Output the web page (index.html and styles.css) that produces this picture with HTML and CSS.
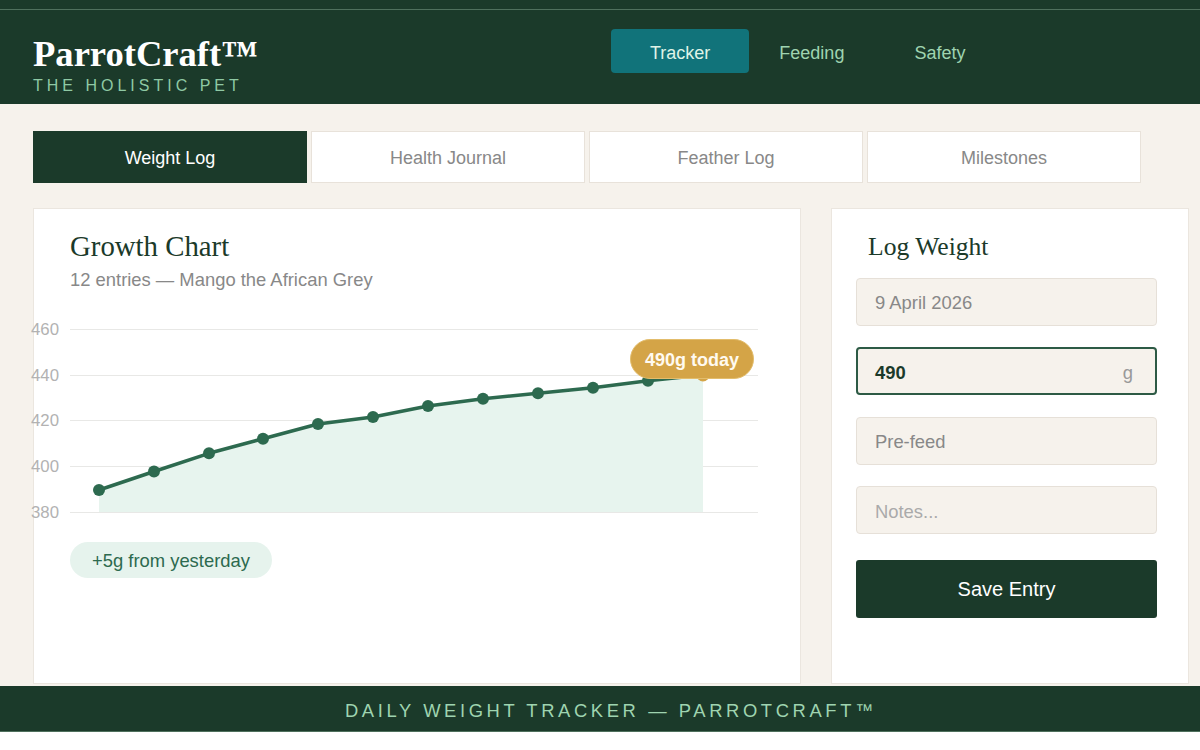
FILE: index.html
```html
<!DOCTYPE html>
<html lang="en">
<head>
<meta charset="utf-8">
<title>ParrotCraft™ — Weight Tracker</title>
<link rel="stylesheet" href="styles.css">
</head>
<body>
<div class="topbar"></div>
<header class="header">
  <div class="brand">
    <div class="logo">ParrotCraft™</div>
    <div class="tagline">THE HOLISTIC PET</div>
  </div>
  <nav class="nav">
    <a class="nav-link active">Tracker</a>
    <a class="nav-link">Feeding</a>
    <a class="nav-link">Safety</a>
  </nav>
</header>
<main class="main">
  <div class="tabs">
    <div class="tab active">Weight Log</div>
    <div class="tab">Health Journal</div>
    <div class="tab">Feather Log</div>
    <div class="tab">Milestones</div>
  </div>
  <div class="panels">
    <section class="card chart-card">
      <h2 class="card-title">Growth Chart</h2>
      <p class="card-sub">12 entries — Mango the African Grey</p>
      <div class="chart">
        <svg class="chart-svg" width="688" height="230" viewBox="0 0 688 230">
          <g class="grid">
            <line x1="0" y1="29.5" x2="688" y2="29.5"/>
            <line x1="0" y1="75.5" x2="688" y2="75.5"/>
            <line x1="0" y1="120.5" x2="688" y2="120.5"/>
            <line x1="0" y1="166.5" x2="688" y2="166.5"/>
            <line x1="0" y1="212.5" x2="688" y2="212.5"/>
          </g>
          <g class="ylabels">
            <text x="-11" y="35">460</text>
            <text x="-11" y="81">440</text>
            <text x="-11" y="126">420</text>
            <text x="-11" y="172">400</text>
            <text x="-11" y="218">380</text>
          </g>
          <polygon class="area" points="29,212 29,190 84,171.5 139,153.3 193,138.7 248,124 303,117 358,106 413,98.7 468,93.3 523,87.7 578,80.7 633,75 633,212"/>
          <polyline class="line" points="29,190 84,171.5 139,153.3 193,138.7 248,124 303,117 358,106 413,98.7 468,93.3 523,87.7 578,80.7 633,75"/>
          <g class="dots">
            <circle cx="29" cy="190" r="6"/>
            <circle cx="84" cy="171.5" r="6"/>
            <circle cx="139" cy="153.3" r="6"/>
            <circle cx="193" cy="138.7" r="6"/>
            <circle cx="248" cy="124" r="6"/>
            <circle cx="303" cy="117" r="6"/>
            <circle cx="358" cy="106" r="6"/>
            <circle cx="413" cy="98.7" r="6"/>
            <circle cx="468" cy="93.3" r="6"/>
            <circle cx="523" cy="87.7" r="6"/>
            <circle cx="578" cy="80.7" r="6"/>
          </g>
          <circle class="dot-today" cx="633" cy="75" r="6.5"/>
        </svg>
        <div class="tooltip">490g today</div>
      </div>
      <span class="badge">+5g from yesterday</span>
    </section>
    <section class="card form-card">
      <h2 class="form-title">Log Weight</h2>
      <div class="field">9 April 2026</div>
      <div class="field field-active"><span class="value">490</span><span class="unit">g</span></div>
      <div class="field">Pre-feed</div>
      <div class="field placeholder">Notes...</div>
      <button class="save">Save Entry</button>
    </section>
  </div>
</main>
<footer class="footer">DAILY WEIGHT TRACKER — PARROTCRAFT™</footer>
</body>
</html>
```

FILE: styles.css
```css
* { box-sizing: border-box; }

html, body {
  margin: 0;
  padding: 0;
  background: #ffffff;
}

body {
  font-family: "Liberation Sans", Arial, sans-serif;
  color: #1b3a2a;
}

.topbar {
  height: 10px;
  background: #1b3a2a;
  border-bottom: 1px solid #4f705d;
}

.header {
  height: 94px;
  background: #1b3a2a;
  padding: 19px 33px 0;
  display: flex;
  align-items: flex-start;
}

.brand {
  flex: 0 0 578px;
  padding-top: 5px;
}

.logo {
  font-family: "Liberation Serif", "Times New Roman", serif;
  font-weight: bold;
  font-size: 36.6px;
  line-height: 39.6px;
  color: #ffffff;
}

.tagline {
  margin-top: 3px;
  font-size: 16px;
  line-height: 18.4px;
  letter-spacing: 4px;
  color: #8fc9a4;
}

.nav {
  display: flex;
}

.nav-link {
  display: flex;
  align-items: center;
  height: 44px;
  padding: 4px 40px 0 30px;
  font-size: 18px;
  color: #9fd4b0;
  border-radius: 4px;
}

.nav-link.active {
  padding: 4px 39px 0;
  background: #11737a;
  color: #dff3e7;
}

.main {
  background: #f6f2ec;
  padding: 27px 11px 2px 33px;
}

.tabs {
  display: grid;
  grid-template-columns: repeat(4, 274px);
  gap: 4px;
}

.tab {
  height: 52px;
  padding-top: 3px;
  display: flex;
  align-items: center;
  justify-content: center;
  background: #ffffff;
  border: 1px solid #e8e2da;
  font-size: 18px;
  color: #888888;
}

.tab.active {
  background: #1b3a2a;
  border-color: #1b3a2a;
  color: #ffffff;
}

.panels {
  margin-top: 25px;
  display: grid;
  grid-template-columns: 768px 358px;
  gap: 30px;
}

.card {
  height: 476px;
  background: #ffffff;
  border: 1px solid #ebe6df;
}

.chart-card {
  padding: 20px 36px;
  display: flex;
  flex-direction: column;
  align-items: flex-start;
}

.card-title {
  margin: 0 0 6px;
  font-family: "Liberation Serif", "Times New Roman", serif;
  font-weight: normal;
  font-size: 28.8px;
  line-height: 1.2;
  color: #1b3a2a;
}

.card-sub {
  margin: 0;
  font-size: 18.4px;
  line-height: 20px;
  color: #888888;
}

.chart {
  position: relative;
  margin-top: 10px;
  width: 688px;
  height: 230px;
}

.chart-svg {
  display: block;
  overflow: visible;
}

.grid line {
  stroke: #e8e8e6;
  stroke-width: 1;
  shape-rendering: crispEdges;
}

.ylabels text {
  font-family: "Liberation Sans", Arial, sans-serif;
  font-size: 16.8px;
  fill: #b2b2b2;
  text-anchor: end;
}

.area {
  fill: #e7f4ee;
}

.line {
  fill: none;
  stroke: #2d6a4f;
  stroke-width: 3.5;
  stroke-linejoin: round;
  stroke-linecap: round;
}

.dots circle {
  fill: #2d6a4f;
}

.dot-today {
  fill: #d4a447;
}

.tooltip {
  position: absolute;
  left: 560px;
  top: 39px;
  width: 124px;
  height: 40px;
  padding-top: 3px;
  border-radius: 20px;
  background: #d4a447;
  border: 1px solid #e3bd6c;
  color: #fffaf0;
  font-weight: bold;
  font-size: 18px;
  display: flex;
  align-items: center;
  justify-content: center;
}

.badge {
  margin-top: 12px;
  display: inline-block;
  padding: 9px 22px 7px;
  line-height: 20px;
  border-radius: 18px;
  background: #e6f3ed;
  color: #2d6a4f;
  font-size: 18.4px;
}

.form-card {
  padding: 23px 31px 0 24px;
  display: flex;
  flex-direction: column;
}

.form-title {
  margin: 0 0 15px;
  padding-left: 12px;
  font-family: "Liberation Serif", "Times New Roman", serif;
  font-weight: normal;
  font-size: 25.6px;
  line-height: 1.2;
  color: #1b3a2a;
}

.field {
  width: 301px;
  height: 48px;
  margin-bottom: 21.5px;
  padding: 3px 18px 0;
  display: flex;
  align-items: center;
  background: #f6f2ec;
  border: 1px solid #e6e0d8;
  border-radius: 4px;
  font-size: 18.4px;
  color: #888888;
}

.field.placeholder {
  color: #aaaaaa;
}

.field-active {
  border: 2px solid #2d5a45;
  padding: 3px 22px 0 17px;
}

.field-active .value {
  font-weight: bold;
  color: #1b3a2a;
}

.field-active .unit {
  margin-left: auto;
  color: #999999;
}

.save {
  margin-top: 4px;
  width: 301px;
  height: 58px;
  padding-top: 2px;
  border: none;
  border-radius: 3px;
  background: #1b3a2a;
  color: #ffffff;
  font-family: "Liberation Sans", Arial, sans-serif;
  font-size: 20px;
}

.footer {
  background: #1b3a2a;
  padding: 15px 0 10px 22px;
  line-height: 20px;
  text-align: center;
  font-size: 18.4px;
  letter-spacing: 3.6px;
  color: #9fd4b0;
  border-bottom: 1px solid #4f705d;
}
```
